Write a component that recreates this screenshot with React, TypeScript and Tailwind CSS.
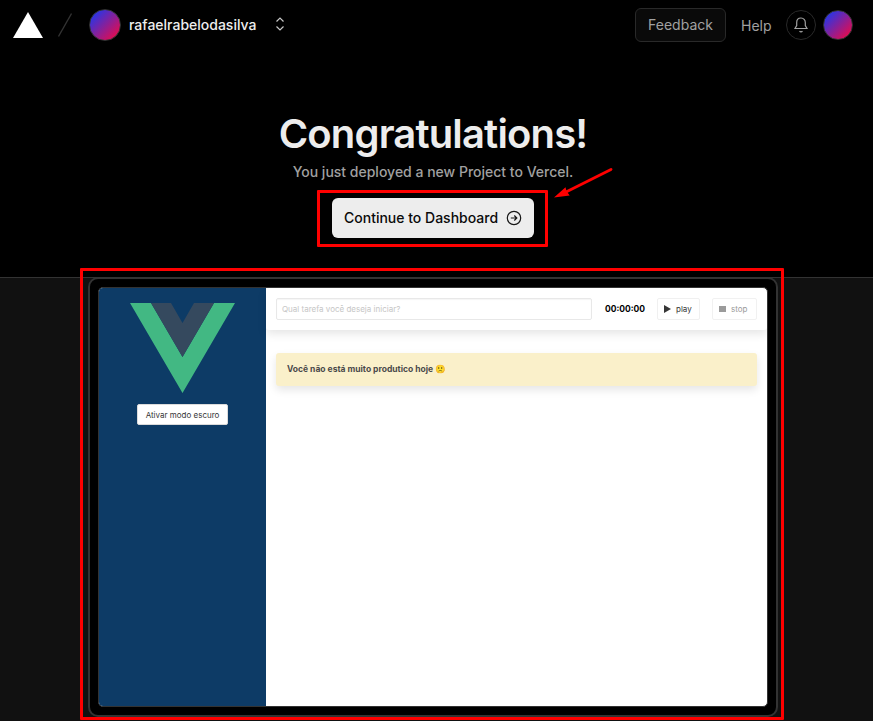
function VueLogo() {
  return (
    <svg className="block h-[90px] w-[105px]" viewBox="0 0 105 90">
      <path fill="#42b883" d="M0 0h21l31.500 54L84 0h21L52.500 90z" />
      <path fill="#35495e" d="M21 0h20l11.500 20L64 0h20L52.500 54z" />
    </svg>
  );
}

function Header() {
  return (
    <header className="flex h-[50px] items-center">
      <svg className="ml-[13px] block h-[26px] w-[30px]" viewBox="0 0 30 26">
        <path d="M15 0l15 26H0z" fill="#fff" />
      </svg>
      <svg className="ml-[15px] block h-[24px] w-[14px]" viewBox="0 0 14 24">
        <path d="M13.500 0.500L0.500 23.500" stroke="#333" strokeWidth="1.300" />
      </svg>
      <div className="ml-[17px] size-8 rounded-full border border-[#333] bg-linear-to-br/srgb from-[#0a3cff] to-[#ff0538]" />
      <span className="-mt-[2px] ml-2 w-[127px] text-[14px] font-medium whitespace-nowrap text-[#ededed]">rafaelrabelodasilva</span>
      <svg className="-mt-[2px] ml-[19px] block h-[16px] w-[10px]" viewBox="0 0 10 16" fill="none" stroke="#c8c8c8" strokeWidth="1.200">
        <path d="M1.500 5.500L5 2l3.500 3.500M1.500 10.500L5 14l3.500-3.500" />
      </svg>
      <div className="mr-[20px] ml-auto flex items-center">
        <button className="h-[34px] w-[91px] rounded-[6px] border border-[#292929] bg-[#0a0a0a] pb-[2px] text-[14px] text-[#a1a1a1]">Feedback</button>
        <span className="ml-[15px] w-[45px] text-[14px] text-[#a1a1a1]">Help</span>
        <div className="flex size-[30px] items-center justify-center rounded-full border border-[#292929]">
          <svg className="block size-4" viewBox="0 0 16 16" fill="none" stroke="#a1a1a1" strokeWidth="1.200">
            <path d="M8 1C5.300 1 3.700 3 3.700 5.500v3L2 11.500h12l-1.700-3v-3C12.300 3 10.700 1 8 1zM6.500 14.200c.8.9 2.200.9 3 0" />
          </svg>
        </div>
        <div className="ml-[7px] size-[30px] rounded-full border border-[#333] bg-linear-to-br/srgb from-[#0a3cff] to-[#ff0538]" />
      </div>
    </header>
  );
}

function Preview() {
  return (
    <div className="flex h-[420px] w-[670px] overflow-hidden rounded-[5px] border border-[#333] bg-white">
      <aside className="flex w-[167px] flex-col items-center bg-[#0d3b66] pt-[15px]">
        <VueLogo />
        <button className="mt-[11px] h-[21px] w-[91px] rounded-[2px] border border-[#dbdbdb] bg-white text-[8px] leading-none text-[#363636]">Ativar modo escuro</button>
      </aside>
      <main className="flex-1">
        <div className="flex h-[42px] items-center rounded-[3px] pl-[10px] text-[8px] shadow-[0_4px_10px_rgba(10,10,10,0.1)]">
          <div className="flex h-[22px] w-[316px] items-center rounded-[2px] border border-[#e8e8e8] px-[5px] text-[#c6c6c6] shadow-[inset_0_1px_1px_rgba(10,10,10,0.04)]">Qual tarefa você deseja iniciar?</div>
          <b className="ml-[13px] w-[52px] text-[8.500px] font-bold text-black">00:00:00</b>
          <button className="flex h-[22px] w-[43px] items-center rounded-[2px] border border-[#f0f0f0] pl-[6px] text-[#363636]">
            <svg className="mr-[5px] block h-[8px] w-[7px]" viewBox="0 0 7 8"><path d="M0 0l7 4-7 4z" fill="#363636" /></svg>play
          </button>
          <button className="ml-[12px] flex h-[22px] w-[45px] items-center rounded-[2px] border border-[#f1f1f1] pl-[6px] text-[#9b9b9b]">
            <span className="mr-[5px] h-[6px] w-[7px] bg-[#9b9b9b]" />stop
          </button>
        </div>
        <div className="mt-[23px] ml-[10px] flex h-[33px] w-[481px] items-center rounded-[3px] bg-[#faf0ca] pl-[11px] text-[8.500px] font-bold text-[#4a4a4a] shadow-[0_4px_9px_rgba(10,10,10,0.1)]">
          <span>Você não está muito produtico hoje 🙁</span>
        </div>
      </main>
    </div>
  );
}

export default function App() {
  return (
    <div className="relative h-[721px] w-[873px] overflow-hidden bg-black font-['Inter','Liberation_Sans',sans-serif]">
      <Header />
      <section className="flex h-[227px] flex-col items-center pr-[7px] pt-[59px]">
        <h1 className="h-[50px] text-[40px] leading-[50px] font-semibold tracking-[-0.84px] whitespace-nowrap text-[#ededed]">Congratulations!</h1>
        <p className="mt-[3px] h-[20px] text-[14px] leading-[20px] font-medium whitespace-nowrap text-[#a1a1a1]">You just deployed a new Project to Vercel.</p>
        <button className="mt-[16px] flex h-[40px] w-[202px] items-center rounded-[6px] bg-[#ededed] pl-[12px] text-[14px] font-medium text-[#0a0a0a]">
          <span className="-mt-[2px] w-[162px] text-left whitespace-nowrap">Continue to Dashboard</span>
          <svg className="block size-4" viewBox="0 0 16 16" fill="none" stroke="#171717" strokeWidth="1.200">
            <circle cx="8" cy="8" r="6.700" />
            <path d="M4.800 8h6M8.300 5.500L10.800 8l-2.500 2.500" />
          </svg>
        </button>
      </section>
      <section className="h-[444px] border-t border-[#333] bg-[#111] pl-[88px]">
        <div className="-mt-px flex h-[440px] w-[690px] items-center justify-center rounded-[10px] border-2 border-[#333] bg-black">
          <Preview />
        </div>
      </section>
      <div className="absolute top-[190px] left-[317px] h-[57px] w-[231px] rounded-[1px] border-3 border-[#f00]" />
      <div className="absolute top-[268px] left-[80px] h-[452px] w-[704px] rounded-[1px] border-3 border-[#f00]" />
      <svg className="absolute top-[165px] left-[550px] h-[36px] w-[66px]" viewBox="0 0 66 36">
        <path d="M61 4.500L16 27" stroke="#f00" strokeWidth="2.800" strokeLinecap="round" />
        <path d="M4 32.500L15.500 22.200l1 3.800 3.200 4.500z" fill="#f00" />
      </svg>
    </div>
  );
}
